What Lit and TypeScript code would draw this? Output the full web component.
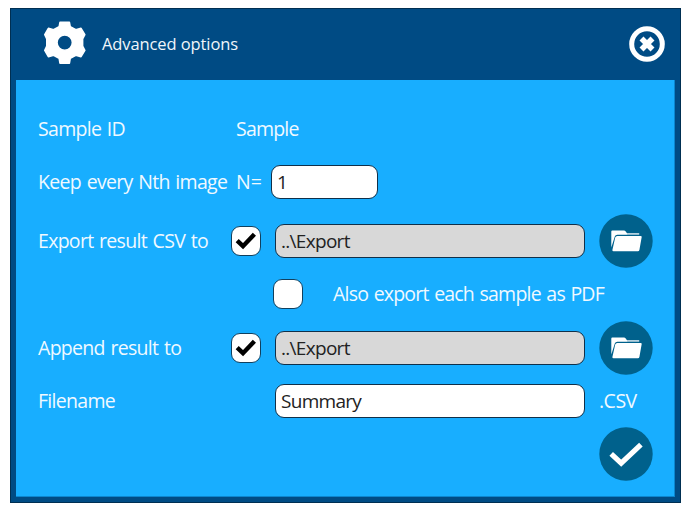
import { LitElement, html, css, svg } from "lit";
import { customElement, property } from "lit/decorators.js";

@customElement("check-box")
class CheckBox extends LitElement {
  @property({ type: Boolean }) checked = false;
  static styles = css`
    :host { display: block; flex: none; }
    .box { box-sizing: border-box; width: 30px; height: 30px; border: 1px solid #10405f; border-radius: 9px; background: #fff; }
    .mark { display: block; width: 28px; height: 28px; }
  `;
  render() {
    return html`<div class="box" role="checkbox" aria-checked=${this.checked}>
      <svg class="mark" viewBox="0 0 28 28">
        ${this.checked ? svg`<path d="M5.2 13.6 L11 19.2 L22.4 7.2" fill="none" stroke="#000" stroke-width="4.4" />` : ""}
      </svg>
    </div>`;
  }
}

@customElement("round-button")
class RoundButton extends LitElement {
  @property() icon = "folder";
  static styles = css`
    :host { display: block; flex: none; }
    .icon { display: block; width: 54px; height: 54px; }
  `;
  render() {
    return html`<svg class="icon" viewBox="0 0 54 54">
      <circle cx="27" cy="27" r="26.7" fill="#00618c" />
      ${this.icon === "folder"
        ? svg`<path d="M12.3 33.5 V17.4 Q12.3 16.4 13.3 16.4 H25 Q26 16.4 26.5 17.2 L28 19.2 L28.4 20.8 H18.4 Q16.3 20.8 15.8 22.6 Z" fill="#fff" />
            <path d="M28 19.9 H40.2" stroke="#b3d0de" stroke-width="1.8" />
            <path d="M18.3 21.9 H41.6 Q42.9 21.9 42.7 23 L40.4 36 Q40.1 37.3 38.9 37.3 H14.5 Q13.2 37.3 13.4 36 L16.2 23.4 Q16.6 21.9 18.3 21.9 Z" fill="#fff" />`
        : svg`<path d="M12.2 26.9 L22.2 36.2 L41.9 17.6" fill="none" stroke="#fff" stroke-width="5.2" />`}
    </svg>`;
  }
}

@customElement("app-root")
class AppRoot extends LitElement {
  static styles = css`
    :host { display: block; box-sizing: border-box; width: 697px; height: 516px; padding: 8px 16px 13px 10px; background: #fff; overflow: hidden; font-family: "Open Sans", "Noto Sans", sans-serif; }
    .window { box-sizing: border-box; height: 495px; border: 1px solid #002f52; background: #004b84; padding: 0 5px; }
    .header { display: flex; align-items: center; height: 71px; padding: 0 9px 0 28px; }
    .gear { width: 42px; height: 44px; margin-top: -3px; }
    .title { flex: 1; margin-left: 16px; margin-top: -3px; font-size: 16.5px; letter-spacing: -0.1px; color: #f0f6fb; }
    .close { width: 38px; height: 38px; margin-top: -2px; }
    .panel { box-sizing: border-box; height: 417px; background: #18aeff; border: solid #0c86cf; border-width: 0 1px 1px 0; padding: 22px 0 0 22px; color: #f0f9ff; font-size: 19.5px; letter-spacing: -0.8px; word-spacing: 1.3px; line-height: 26px; white-space: nowrap; }
    .row { display: flex; align-items: center; height: 53px; }
    .row.keep { height: 59px; }
    .row.keep .label, .row.keep .prefix, .row.keep .field { margin-top: -6px; }
    .row.option { height: 54px; }
    .label { flex: none; width: 193px; letter-spacing: -0.7px; }
    .inset { margin-left: 5px; }
    .prefix { width: 35px; margin-left: 5px; flex: none; letter-spacing: 0; }
    .indent { flex: none; width: 42px; }
    .gap { flex: none; width: 30px; }
    .field { box-sizing: border-box; width: 310px; height: 34px; margin-left: 14px; border: 1px solid #10304a; border-radius: 9px; background: #fff; color: #222; padding: 3px 5px; font-size: 19px; letter-spacing: -0.7px; }
    .field.short { width: 107px; margin-left: 0; }
    .field.muted { background: #d8d8d8; }
    .after { margin-left: 14px; letter-spacing: -0.5px; }
    .pdf { margin-left: 30px; }
    .confirm { justify-content: flex-end; padding-right: 21px; }
  `;
  render() {
    return html`<div class="window">
      <div class="header">
        <svg class="gear" viewBox="0 0 42 44">
          <path fill="#fff" stroke="#fff" stroke-width="1.6" stroke-linejoin="round" fill-rule="evenodd" d="M16 1.4 H25.4 L26.2 5.6 L31.8 8.8 L37 7.3 L40.8 13.6 L38.6 17.8 V25.2 L40.8 29.4 L37 35.7 L31.8 34.2 L26.2 37.4 L25.4 42.2 H16 L15.2 37.4 L9.6 34.2 L4.4 35.7 L.8 29.4 L2.8 25.2 V17.8 L.8 13.6 L4.4 7.3 L9.6 8.8 L15.2 5.6 Z M20.7 13.9 A7.7 7.7 0 1 0 20.7 29.3 A7.7 7.7 0 1 0 20.7 13.9 Z" />
        </svg>
        <div class="title">Advanced options</div>
        <svg class="close" viewBox="0 0 38 38">
          <circle cx="19" cy="19" r="15.3" fill="none" stroke="#fff" stroke-width="5" />
          <path d="M13.5 13.5 L24.5 24.5 M24.5 13.5 L13.5 24.5" stroke="#fff" stroke-width="5.6" />
        </svg>
      </div>
      <div class="panel">
        <div class="row"><div class="label">Sample ID</div><div class="inset">Sample</div></div>
        <div class="row keep"><div class="label">Keep every Nth image</div><div class="prefix">N=</div><div class="field short">1</div></div>
        <div class="row"><div class="label">Export result CSV to</div><check-box checked></check-box><div class="field muted">..\\Export</div><round-button class="after"></round-button></div>
        <div class="row option"><div class="label"></div><div class="indent"></div><check-box></check-box><div class="pdf">Also export each sample as PDF</div></div>
        <div class="row"><div class="label">Append result to</div><check-box checked></check-box><div class="field muted">..\\Export</div><round-button class="after"></round-button></div>
        <div class="row"><div class="label">Filename</div><div class="gap"></div><div class="field">Summary</div><div class="after">.CSV</div></div>
        <div class="row confirm"><round-button icon="check"></round-button></div>
      </div>
    </div>`;
  }
}
